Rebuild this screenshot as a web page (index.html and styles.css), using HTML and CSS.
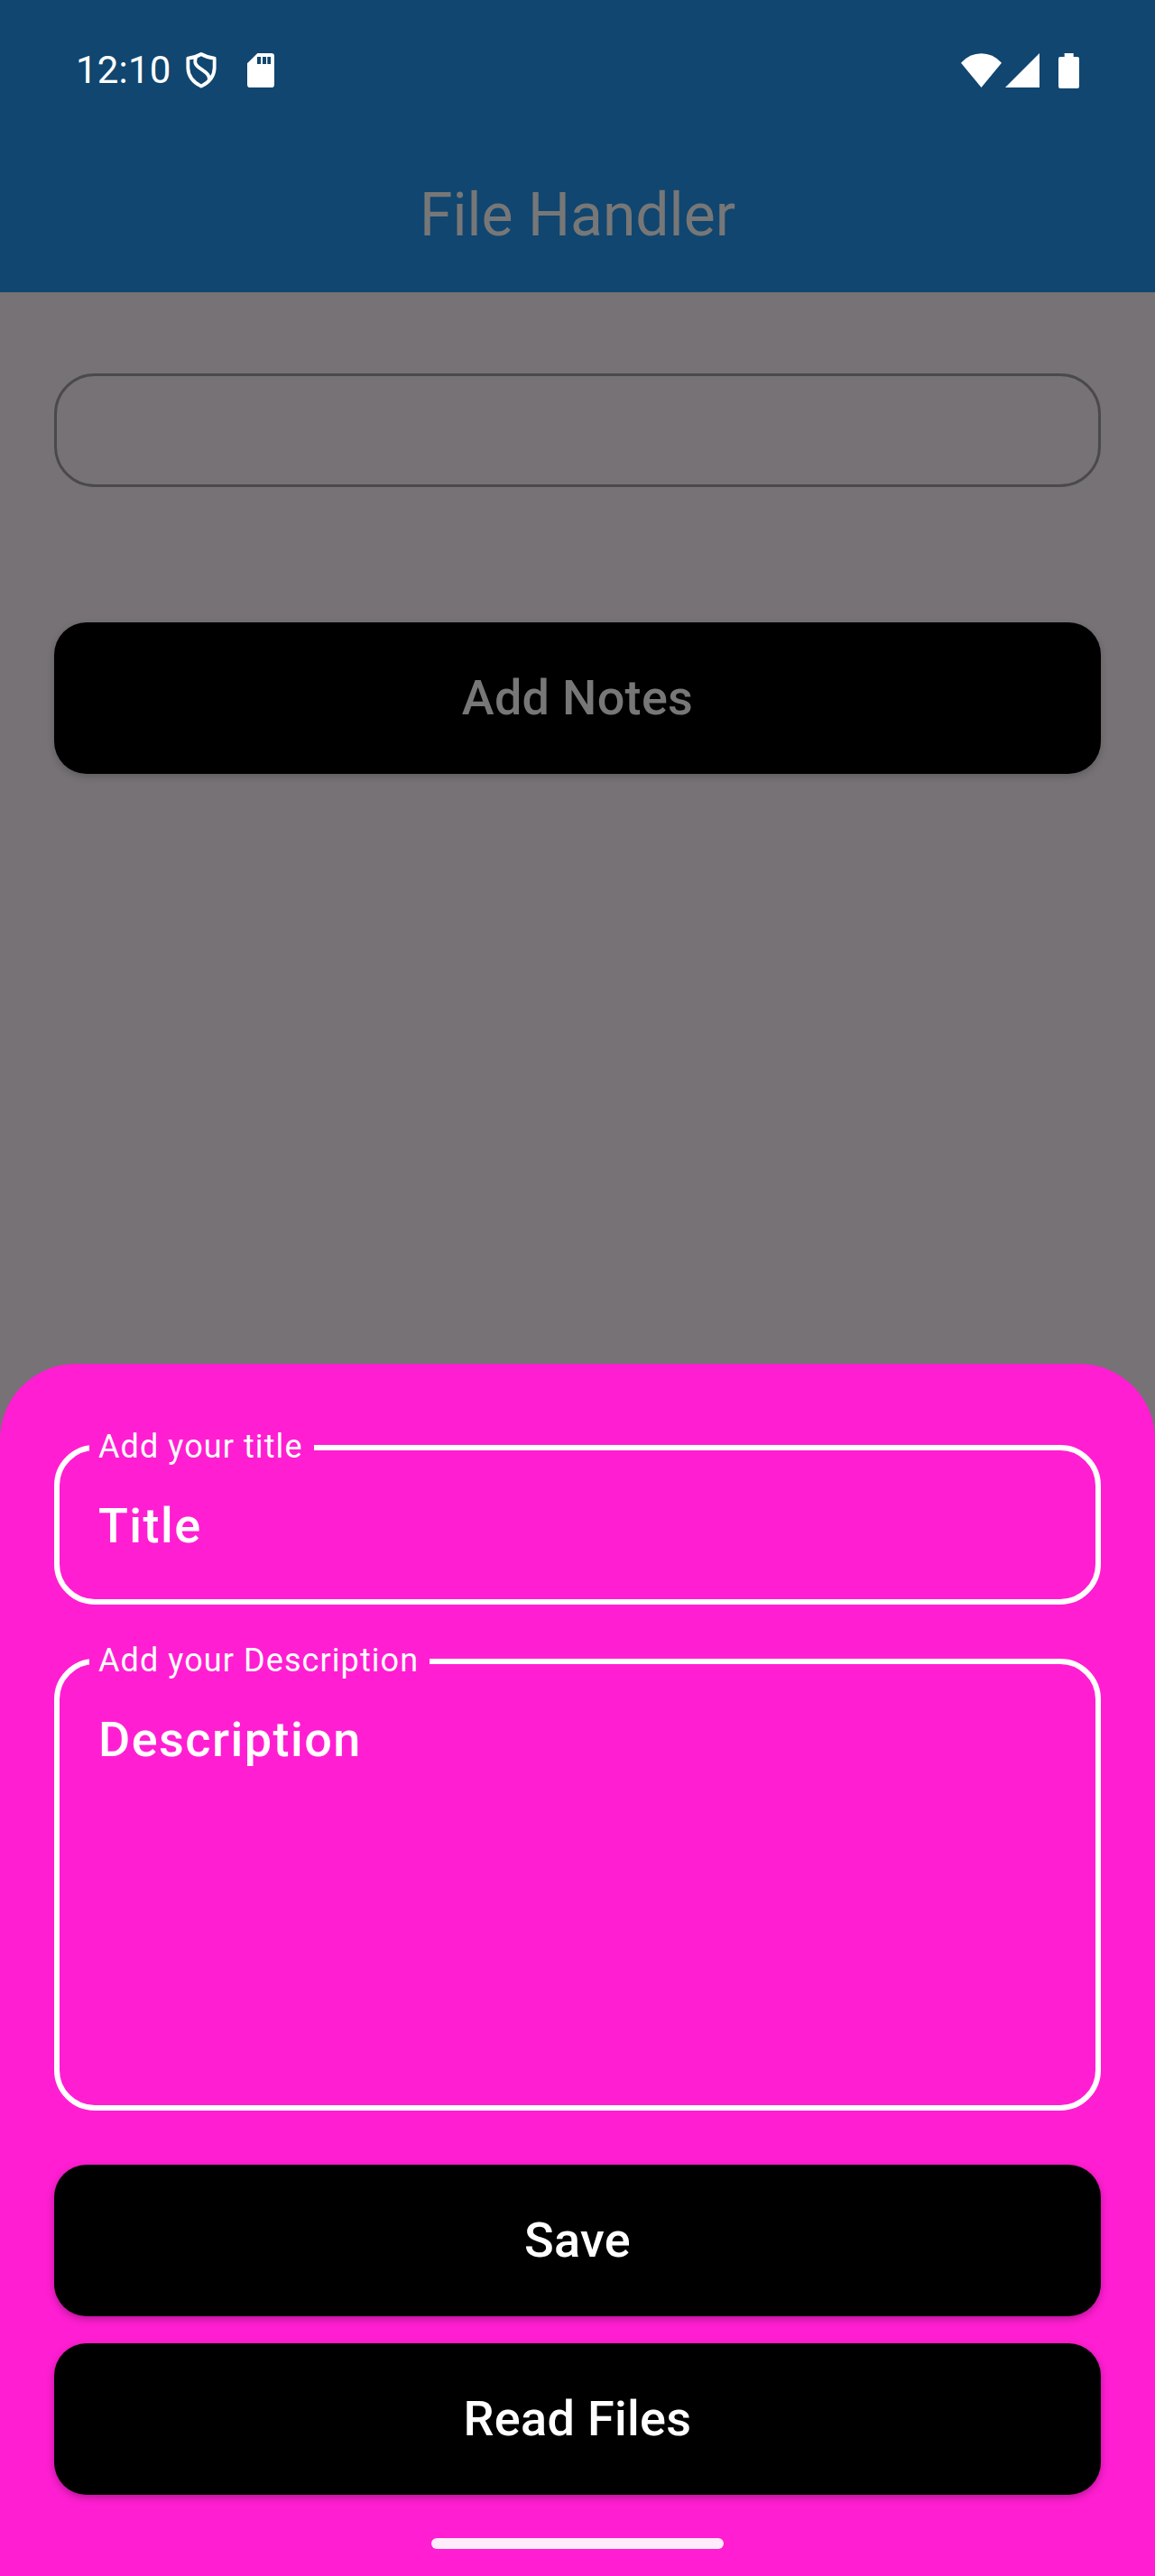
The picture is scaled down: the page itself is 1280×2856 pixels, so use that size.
FILE: index.html
```html
<!DOCTYPE html>
<html lang="en">
<head>
<meta charset="utf-8">
<title>File Handler</title>
<link rel="stylesheet" href="styles.css">
</head>
<body>
<div class="screen">
  <header class="app-header">
    <div class="status-bar">
      <span class="clock">12:10</span>
      <svg class="icon-shield" viewBox="0 0 102 120" width="34" height="40"><path d="M51 6 Q32 17 7 20 V52 Q8 91 51 113 Q94 91 95 52 V20 Q70 17 51 6Z M35 13 C26 34 31 43 51 56 C72 70 80 78 77 94" fill="none" stroke="#fff" stroke-width="11.500" stroke-linejoin="round"/></svg>
      <svg class="icon-sd" viewBox="0 0 90 114" width="30" height="38"><path fill="#fff" fill-rule="evenodd" d="M34 0H80Q90 0 90 10V104Q90 114 80 114H10Q0 114 0 104V34Z M33 12V36H45V12Z M51 12V36H63V12Z M67 12V36H78V12Z"/></svg>
      <span class="spacer"></span>
      <svg class="icon-wifi" viewBox="0 0 135 114" width="45" height="38"><path fill="#fff" d="M0 32Q29 1 67.500 1Q106 1 135 32L67.500 114Z"/></svg>
      <svg class="icon-signal" viewBox="0 0 113 113" width="38" height="38"><path fill="#fff" d="M0 113L113 0V113Z"/></svg>
      <svg class="icon-battery" viewBox="0 0 69 117" width="23" height="39"><path fill="#fff" d="M20 0H50V12H63Q69 12 69 18V110Q69 117 63 117H6Q0 117 0 110V18Q0 12 6 12H20Z"/></svg>
    </div>
    <h1 class="title">File Handler</h1>
  </header>
  <main class="content">
    <div class="file-field"></div>
    <div class="button button-dimmed">Add Notes</div>
  </main>
  <section class="sheet">
    <fieldset class="field field-title">
      <legend class="label">Add your title</legend>
      <div class="value">Title</div>
    </fieldset>
    <fieldset class="field field-description">
      <legend class="label">Add your Description</legend>
      <div class="value">Description</div>
    </fieldset>
    <div class="button button-save">Save</div>
    <div class="button button-read">Read Files</div>
    <div class="home-bar"></div>
  </section>
</div>
</body>
</html>
```
FILE: styles.css
```css
* { box-sizing: border-box; }
body { margin: 0; background: #767276; font-family: Roboto, sans-serif; }
.screen { width: 1280px; height: 2856px; display: flex; flex-direction: column; overflow: hidden; }
.app-header { height: 324px; background: #10466f; flex: none; }
.status-bar { height: 156px; display: flex; align-items: center; padding: 0 84px 0 84px; color: #fff; }
.clock { font-size: 42px; line-height: 48px; width: 122px; letter-spacing: 0.2px; }
.icon-sd { margin-left: 34px; }
.spacer { flex: 1; }
.icon-signal { margin-left: 4px; }
.icon-battery { margin-left: 21px; }
.title { margin: 0; font-size: 66px; font-weight: 400; line-height: 84px; padding-top: 41px; text-align: center; color: #777; }
.content { flex: 1; padding: 90px 60px 0; }
.file-field { height: 126px; border: 3px solid #4a4a4a; border-radius: 45px; margin-bottom: 150px; }
.button { height: 168px; padding-bottom: 2px; border-radius: 36px; background: #000; color: #fff; font-size: 54px; font-weight: 500; letter-spacing: 0.3px; display: flex; align-items: center; justify-content: center; box-shadow: 0 3px 8px rgba(0, 0, 0, 0.3); }
.button-dimmed { color: #777; box-shadow: 0 3px 8px rgba(0, 0, 0, 0.2); }
.sheet { height: 1344px; flex: none; background: #ff1ed2; border-radius: 84px 84px 0 0; padding: 72px 60px 0; display: flex; flex-direction: column; }
.field { margin: 0; padding: 0 43px; border: 6px solid #fff; border-radius: 45px; color: #fff; min-width: 0; }
.field-title { height: 195px; }
.field-description { height: 519px; margin-top: 42px; }
.label { margin-left: -10px; padding: 0 12px 2px 10px; font-size: 36px; line-height: 40px; letter-spacing: 1.08px; }
.value { padding-top: 30px; font-size: 54px; font-weight: 500; line-height: 72px; letter-spacing: 1.45px; }
.button-save { margin-top: 60px; }
.button-read { margin-top: 30px; }
.home-bar { width: 324px; height: 12px; border-radius: 6px; background: #ffecfb; margin: 48px auto 0; }
```
